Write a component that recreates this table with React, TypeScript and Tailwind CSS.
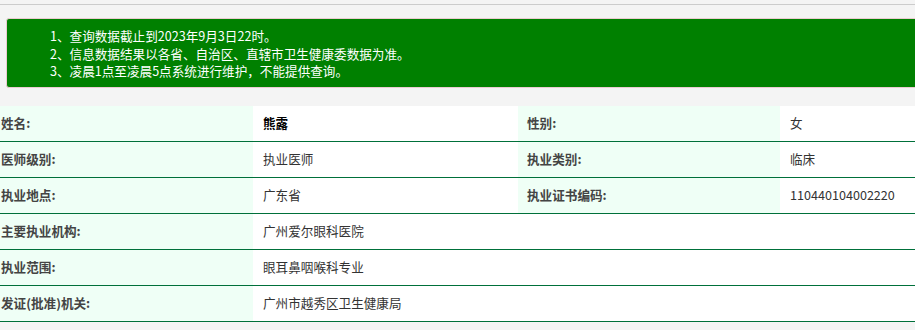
const notices = [
  '1、查询数据截止到2023年9月3日22时。',
  '2、信息数据结果以各省、自治区、直辖市卫生健康委数据为准。',
  '3、凌晨1点至凌晨5点系统进行维护，不能提供查询。',
];

type Row = { label: string; value: string; label2?: string; value2?: string; strong?: boolean };

const rows: Row[] = [
  { label: '姓名:', value: '熊露', label2: '性别:', value2: '女', strong: true },
  { label: '医师级别:', value: '执业医师', label2: '执业类别:', value2: '临床' },
  { label: '执业地点:', value: '广东省', label2: '执业证书编码:', value2: '110440104002220' },
  { label: '主要执业机构:', value: '广州爱尔眼科医院' },
  { label: '执业范围:', value: '眼耳鼻咽喉科专业' },
  { label: '发证(批准)机关:', value: '广州市越秀区卫生健康局' },
];

export default function App() {
  return (
    <div
      className="w-[915px] h-[330px] overflow-hidden bg-[#f4f4f4] text-[12.6px] text-[#333]"
      style={{ fontFamily: '"Noto Sans CJK SC", "Noto Sans", sans-serif' }}
    >
      <div className="h-[4px]" />
      <div className="h-px bg-[#cccccc]" />

      <div className="pt-[13px] pl-[6px] -mr-[10px]">
        <div className="h-[70px] rounded-[3px] border border-[#ebccd1] bg-[#008000] pl-[43px] pt-[8px] text-white leading-[17.5px]">
          {notices.map((n) => (
            <div key={n}>{n}</div>
          ))}
        </div>
      </div>

      <div className="mt-[18px] bg-white">
        {rows.map((r) => (
          <div key={r.label}>
            <div className="grid grid-cols-[253px_265px_262px_1fr] h-[35px]">
              <div className="flex items-center pl-px bg-[#effff6] font-bold text-[#444]">{r.label}</div>
              {r.label2 ? (
                <>
                  <div className={`flex items-center pl-[10px] ${r.strong ? 'font-bold text-black' : ''}`}>
                    {r.value}
                  </div>
                  <div className="flex items-center pl-[9px] bg-[#effff6] font-bold text-[#444]">{r.label2}</div>
                  <div className="flex items-center pl-[10px]">{r.value2}</div>
                </>
              ) : (
                <div className="col-span-3 flex items-center pl-[10px]">{r.value}</div>
              )}
            </div>
            <div className="h-px bg-[#00703a]" />
          </div>
        ))}
      </div>
    </div>
  );
}
